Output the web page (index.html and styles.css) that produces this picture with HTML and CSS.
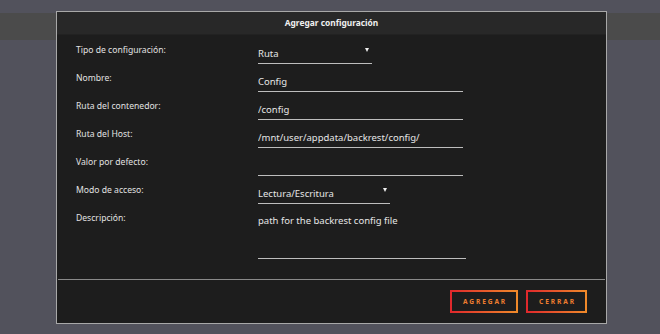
FILE: index.html
```html
<!DOCTYPE html>
<html lang="es">
<head>
  <meta charset="UTF-8">
  <meta name="viewport" content="width=device-width, initial-scale=1.0">
  <title>Agregar configuración</title>
  <link rel="stylesheet" href="styles.css">
</head>
<body>

<div class="page-band"></div>

<div class="dialog">
  <div class="dialog-title">Agregar configuración</div>

  <form class="config-form">
    <label class="field-label">Tipo de configuración:</label>
    <div class="select-wrap short">
      <select>
        <option>Ruta</option>
      </select>
      <span class="caret"></span>
    </div>

    <label class="field-label">Nombre:</label>
    <input type="text" class="text-input" value="Config">

    <label class="field-label">Ruta del contenedor:</label>
    <input type="text" class="text-input" value="/config">

    <label class="field-label">Ruta del Host:</label>
    <input type="text" class="text-input" value="/mnt/user/appdata/backrest/config/">

    <label class="field-label">Valor por defecto:</label>
    <input type="text" class="text-input" value="">

    <label class="field-label">Modo de acceso:</label>
    <div class="select-wrap medium">
      <select>
        <option>Lectura/Escritura</option>
      </select>
      <span class="caret"></span>
    </div>

    <label class="field-label">Descripción:</label>
    <textarea class="text-area">path for the backrest config file</textarea>
  </form>

  <div class="dialog-footer">
    <button type="button" class="btn btn-add">Agregar</button>
    <button type="button" class="btn btn-close">Cerrar</button>
  </div>
</div>

</body>
</html>
```

FILE: styles.css
```css
body {
  margin: 0;
  padding: 0;
  background: #52525c;
  font-family: "Noto Sans", "Open Sans", Arial, sans-serif;
  height: 334px;
  overflow: hidden;
}
.page-band {
  margin-top: 13px;
  height: 27px;
  background: #4b4b4b;
}
.dialog {
  position: absolute;
  left: 56px;
  top: 11px;
  width: 549px;
  height: 311px;
  background: #1d1d1d;
  border: 1px solid #a8a8a8;
  display: flex;
  flex-direction: column;
}
.dialog-title {
  height: 22px;
  line-height: 22px;
  background: #282828;
  border-bottom: 1px solid #222;
  color: #f0f0f0;
  font-size: 8.4px;
  font-weight: bold;
  text-align: center;
}
.config-form {
  display: grid;
  grid-template-columns: 182px 1fr;
  grid-template-rows: repeat(6, 28px) 56px;
  padding: 1px 0 0 19px;
  align-items: end;
}
.field-label {
  align-self: center;
  color: #e2e2e2;
  font-size: 8.6px;
}
.config-form .field-label:last-of-type {
  align-self: start;
  margin-top: 8px;
}
.text-input, .select-wrap select, .text-area {
  box-sizing: border-box;
  background: transparent;
  border: none;
  border-bottom: 1px solid #bdbdbd;
  color: #e6e6e6;
  font-family: inherit;
  font-size: 9.5px;
  padding: 0;
  outline: none;
}
.text-input {
  width: 205px;
  height: 20px;
}
.select-wrap {
  position: relative;
}
.select-wrap select {
  -webkit-appearance: none;
  appearance: none;
  width: 100%;
  height: 20px;
}
.select-wrap.short {
  width: 114px;
}
.select-wrap.medium {
  width: 132px;
}
.caret {
  position: absolute;
  right: 3px;
  top: 8px;
  width: 0;
  height: 0;
  border-left: 2.5px solid transparent;
  border-right: 2.5px solid transparent;
  border-top: 4px solid #eee;
}
.text-area {
  width: 208px;
  height: 48px;
  margin-bottom: 1px;
  resize: none;
  line-height: 20px;
}
.dialog-footer {
  margin: 19px 1px 0;
  border-top: 1px solid #8a8a8a;
  display: flex;
  justify-content: flex-end;
  gap: 8px;
  padding: 10px 18px 0 0;
}
.btn {
  box-sizing: border-box;
  height: 23px;
  padding: 0 0 0 2px;
  background: transparent;
  border: 2px solid;
  border-image: linear-gradient(to right, #e0282c, #f08a2a) 1;
  color: #ef7d30;
  font-family: inherit;
  font-size: 6.6px;
  font-weight: bold;
  letter-spacing: 1.9px;
  text-transform: uppercase;
  text-align: center;
  cursor: pointer;
}
.btn-add {
  width: 68px;
}
.btn-close {
  width: 61px;
}
```
